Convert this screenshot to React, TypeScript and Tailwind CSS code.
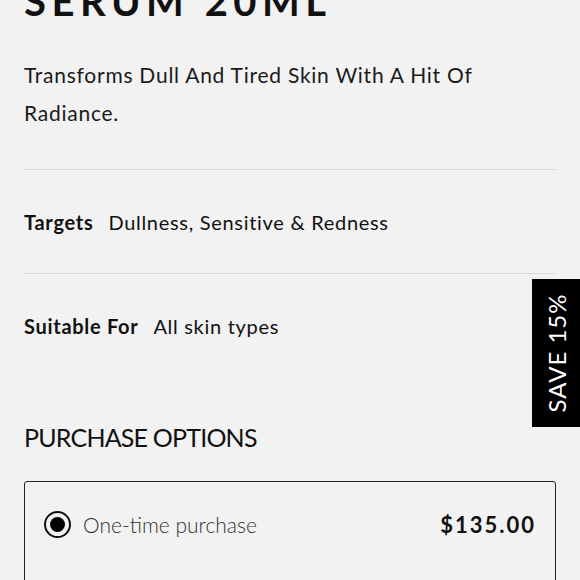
import React from "react";

export default function App() {
  const font = { fontFamily: "Lato, 'Noto Sans', sans-serif" };
  return (
    <div className="relative w-[580px] h-[580px] overflow-hidden bg-[#f2f2f2] text-[#111]" style={font}>
      <div className="px-6">
        <h1 className="-mt-[19px] text-[40px] leading-[40px] font-bold tracking-[5.5px] text-[#111]">SERUM 20ML</h1>
        <p className="mt-[35px] text-[21px] leading-[38px] tracking-[0.75px] text-[#1a1a1a]">
          Transforms Dull And Tired Skin With A Hit Of Radiance.
        </p>
        <div className="mt-[37px] border-t border-[#d6d6d6]" />
        <div className="h-[103px] flex items-center text-[20px] tracking-[0.7px]">
          <span className="font-bold mr-[15px]">Targets</span>
          <span>Dullness, Sensitive &amp; Redness</span>
        </div>
        <div className="border-t border-[#d6d6d6]" />
        <div className="h-[104px] flex items-center text-[20px] tracking-[0.7px]">
          <span className="font-bold mr-[15px]">Suitable For</span>
          <span>All skin types</span>
        </div>
        <h2 className="mt-[43px] text-[25px] leading-[32px] font-normal tracking-[-0.8px] text-[#111]">PURCHASE OPTIONS</h2>
        <div className="mt-[28px] h-[140px] rounded-[3px] border-[1.5px] border-[#222] px-[19px] pt-[26px]">
          <div className="flex items-center justify-between">
            <div className="flex items-center gap-[12px]">
              <div className="w-[27px] h-[27px] rounded-full border-2 border-[#111] flex items-center justify-center">
                <div className="w-[15px] h-[15px] rounded-full bg-black" />
              </div>
              <span className="text-[21px] text-[#333] font-light">One-time purchase</span>
            </div>
            <span className="text-[22px] font-bold tracking-[2px] text-[#111]">$135.00</span>
          </div>
        </div>
      </div>
      <div className="absolute right-0 top-[279px] w-[48px] h-[148px] bg-black flex items-center justify-center">
        <span className="-rotate-90 whitespace-nowrap text-white text-[24px] font-normal tracking-[1px]">SAVE 15%</span>
      </div>
    </div>
  );
}
